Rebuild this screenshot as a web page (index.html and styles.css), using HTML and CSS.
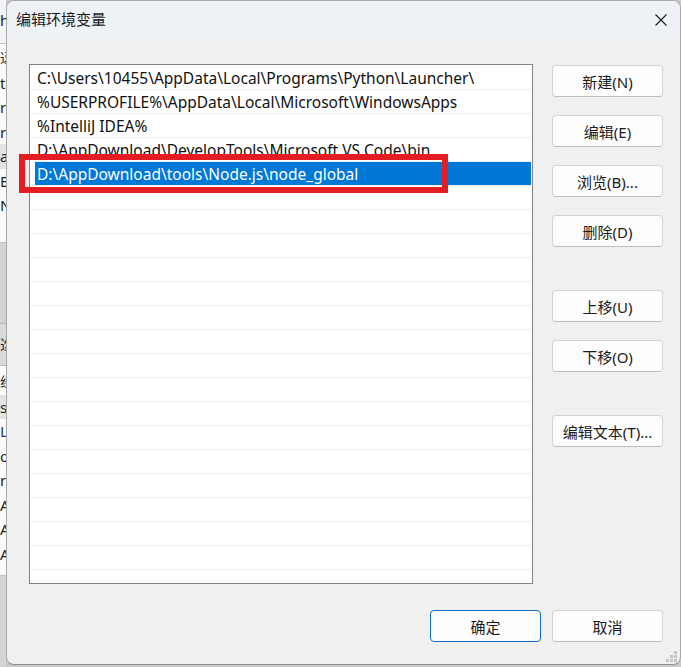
FILE: index.html
```html
<!DOCTYPE html>
<html lang="zh-CN">
<head>
<meta charset="utf-8">
<title>编辑环境变量</title>
<link rel="stylesheet" href="styles.css">
</head>
<body>
<div class="bgwin">
  <div class="bg-a"><span class="bg-line">h</span></div>
  <div class="bg-b">
    <span class="bg-line cjk">迳</span>
    <span class="bg-line">t</span>
    <span class="bg-line">r</span>
    <span class="bg-line">r</span>
    <span class="bg-line hl">a</span>
    <span class="bg-line">E</span>
    <span class="bg-line">N</span>
  </div>
  <div class="bg-c"></div>
  <div class="bg-d"><span class="bg-line cjk">迄</span></div>
  <div class="bg-e">
    <span class="bg-line cjk">经</span>
    <span class="bg-line hl">sl</span>
    <span class="bg-line blue">L</span>
    <span class="bg-line">o</span>
    <span class="bg-line">r</span>
    <span class="bg-line">A</span>
    <span class="bg-line">A</span>
    <span class="bg-line">A</span>
    <span class="bg-line">.</span>
  </div>
  <div class="bg-f"></div>
</div>

<div class="dialog">
  <div class="titlebar">
    <span class="title">编辑环境变量</span>
    <svg class="close" width="12" height="12" viewBox="0 0 12 12"><path d="M0.5 0.5 L11.5 11.5 M11.5 0.5 L0.5 11.5" stroke="#1b1b1b" stroke-width="1.1" fill="none"/></svg>
  </div>
  <div class="content">
    <div class="list">
      <div class="row"><div class="cell">C:\Users\10455\AppData\Local\Programs\Python\Launcher\</div></div>
      <div class="row"><div class="cell">%USERPROFILE%\AppData\Local\Microsoft\WindowsApps</div></div>
      <div class="row"><div class="cell">%IntelliJ IDEA%</div></div>
      <div class="row"><div class="cell">D:\AppDownload\DevelopTools\Microsoft VS Code\bin</div></div>
      <div class="row"><div class="cell selected">D:\AppDownload\tools\Node.js\node_global</div></div>
      <div class="row"><div class="cell"></div></div>
      <div class="row"><div class="cell"></div></div>
      <div class="row"><div class="cell"></div></div>
      <div class="row"><div class="cell"></div></div>
      <div class="row"><div class="cell"></div></div>
      <div class="row"><div class="cell"></div></div>
      <div class="row"><div class="cell"></div></div>
      <div class="row"><div class="cell"></div></div>
      <div class="row"><div class="cell"></div></div>
      <div class="row"><div class="cell"></div></div>
      <div class="row"><div class="cell"></div></div>
      <div class="row"><div class="cell"></div></div>
      <div class="row"><div class="cell"></div></div>
      <div class="row"><div class="cell"></div></div>
      <div class="row"><div class="cell"></div></div>
      <div class="row"><div class="cell"></div></div>
      <div class="row"><div class="cell"></div></div>
    </div>
    <div class="side">
      <div class="group">
        <button class="btn">新建(N)</button>
        <button class="btn">编辑(E)</button>
        <button class="btn">浏览(B)...</button>
        <button class="btn">删除(D)</button>
      </div>
      <div class="group">
        <button class="btn">上移(U)</button>
        <button class="btn">下移(O)</button>
      </div>
      <div class="group">
        <button class="btn">编辑文本(T)...</button>
      </div>
    </div>
  </div>
  <div class="footer">
    <button class="btn primary">确定</button>
    <button class="btn">取消</button>
  </div>
  <div class="annot"></div>
  <svg class="grip" width="13" height="12" viewBox="0 0 13 12">
    <rect x="9" y="0" width="3" height="3" fill="#c4c4c4"/>
    <rect x="5" y="4" width="3" height="3" fill="#c4c4c4"/>
    <rect x="9" y="4" width="3" height="3" fill="#c4c4c4"/>
    <rect x="1" y="8" width="3" height="3" fill="#c4c4c4"/>
    <rect x="5" y="8" width="3" height="3" fill="#c4c4c4"/>
    <rect x="9" y="8" width="3" height="3" fill="#c4c4c4"/>
  </svg>
</div>
</body>
</html>
```

FILE: styles.css
```css
* { box-sizing: border-box; }
html, body { margin: 0; padding: 0; }
body {
  width: 681px;
  height: 667px;
  overflow: hidden;
  display: flex;
  align-items: flex-start;
  background: #c9c9c9;
  font-family: "Noto Sans", "Noto Sans CJK SC", sans-serif;
  color: #1b1b1b;
}

/* background window strip */
.bgwin {
  width: 6px;
  height: 667px;
  flex: none;
  overflow: hidden;
  display: flex;
  flex-direction: column;
  font-size: 15px;
  color: #1f1f2a;
}
.bg-line {
  display: block;
  height: 24.5px;
  line-height: 24px;
  white-space: nowrap;
  padding-left: 0;
}
.bg-line.cjk { font-size: 14px; }
.bg-line.hl { background: #e4e4e4; }
.bg-line.blue { color: #1a3a8a; }
.bg-a {
  height: 44px;
  background: #f4f4f4;
  border-bottom: 1px solid #c8c8c8;
  padding-top: 8px;
}
.bg-b {
  height: 199px;
  background: #fbfbfb;
  border-bottom: 1px solid #bcbcbc;
  padding-top: 2px;
}
.bg-c {
  height: 81px;
  background: #d3d3d3;
  border-bottom: 1px solid #b8b8b8;
}
.bg-d {
  height: 42px;
  background: #dadada;
  border-bottom: 1px solid #bdbdbd;
  padding-top: 9px;
}
.bg-e {
  height: 210px;
  background: #fbfbfb;
  border-bottom: 1px solid #c0c0c0;
  padding-top: 4px;
}
.bg-f {
  flex: 1;
  background: #d4d4d4;
}

/* dialog */
.dialog {
  position: relative;
  width: 675px;
  height: 665px;
  flex: none;
  display: flex;
  flex-direction: column;
  border: 1px solid #a9a9a9;
  border-bottom-color: #8f8f8f;
  border-radius: 8px;
  background: #f0f0f0;
  overflow: hidden;
}
.titlebar {
  height: 37px;
  flex: none;
  display: flex;
  align-items: center;
  justify-content: space-between;
  padding: 0 13px 0 9px;
  background: #eef2f7;
}
.title {
  font-size: 15px;
  line-height: 20px;
  padding-bottom: 1px;
}
.close { display: block; margin-top: 1px; }

.content {
  flex: none;
  display: flex;
  gap: 19px;
  padding: 26px 17px 0 22px;
}
.list {
  width: 504px;
  height: 520px;
  border: 1px solid #838383;
  background: #ffffff;
  padding: 1px;
  overflow: hidden;
  font-size: 15.5px;
}
.row {
  height: 24px;
  border-bottom: 1px solid #efefef;
}
.cell {
  height: 23px;
  margin-left: 4px;
  padding-left: 2px;
  line-height: 24px;
  white-space: nowrap;
  color: #111;
}
.cell.selected {
  background: #0078d7;
  color: #ffffff;
}

.side {
  width: 111px;
  display: flex;
  flex-direction: column;
  gap: 43px;
  padding-top: 1px;
}
.group {
  display: flex;
  flex-direction: column;
  gap: 18px;
}
.btn {
  width: 111px;
  height: 32px;
  padding: 0;
  margin: 0;
  font-family: "Noto Sans", "Noto Sans CJK SC", sans-serif;
  font-size: 15px;
  color: #1b1b1b;
  background: #fdfdfd;
  border: 1px solid #d3d3d3;
  border-bottom-color: #bdbdbd;
  border-radius: 4px;
}
.btn.primary {
  border: 1px solid #0f6cc8;
}

.footer {
  flex: none;
  display: flex;
  justify-content: flex-end;
  gap: 11px;
  padding: 26px 17px 0 0;
}

/* annotation overlay */
.annot {
  position: absolute;
  left: 12px;
  top: 153px;
  width: 429px;
  height: 39px;
  border: 6px solid #e41d24;
}
.grip {
  position: absolute;
  right: 2px;
  bottom: 1px;
}
```
